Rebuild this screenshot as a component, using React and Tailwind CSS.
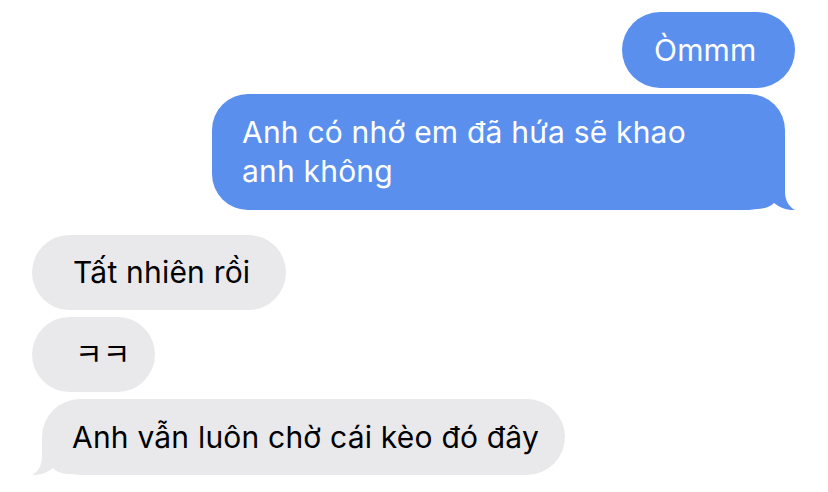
import React from "react";

const font = { fontFamily: "Inter, 'Noto Sans CJK KR', sans-serif" };

const tailPath =
  "M0 0 L30 0 L30 22 C30 30 34 37 40 40 C33 40.5 25 38 19 33 C15 37 10 39 0 39 Z";

function BlueTail() {
  return (
    <svg
      className="absolute right-[-10px] bottom-[-1px]"
      width="40"
      height="41"
      viewBox="0 0 40 41"
    >
      <path d={tailPath} fill="#5b8fee" />
    </svg>
  );
}

function GrayTail() {
  return (
    <svg
      className="absolute left-[-10px] bottom-[-1px] -scale-x-100"
      width="40"
      height="41"
      viewBox="0 0 40 41"
    >
      <path d={tailPath} fill="#e9e9eb" />
    </svg>
  );
}

export default function App() {
  return (
    <div
      className="w-[828px] h-[492px] bg-white overflow-hidden pt-[12px] tracking-[0.2px]"
      style={font}
    >
      {/* sent */}
      <div className="flex flex-col items-end gap-[6px] pr-[33px]">
        <div className="h-[76px] w-[173px] rounded-full bg-[#5b8fee] text-white text-[30px] flex items-center pl-[32px] whitespace-nowrap">
          Òmmm
        </div>
        <div className="relative mr-[10px] h-[116px] w-[573px] rounded-[36px] bg-[#5b8fee] text-white text-[30px] leading-[39px] flex items-center pl-[30px]">
          <div className="relative z-10">
            Anh có nhớ em đã hứa sẽ khao
            <br />
            anh không
          </div>
          <BlueTail />
        </div>
      </div>

      {/* received */}
      <div className="flex flex-col items-start gap-[7px] pl-[32px] mt-[25px]">
        <div className="h-[75px] w-[254px] rounded-full bg-[#e9e9eb] text-black text-[30px] flex items-center pl-[41px] whitespace-nowrap">
          Tất nhiên rồi
        </div>
        <div className="h-[75px] w-[123px] rounded-full bg-[#e9e9eb] text-black text-[30px] flex items-center pl-[43px] whitespace-nowrap">
          ㅋㅋ
        </div>
        <div className="relative ml-[10px] h-[76px] w-[523px] rounded-full bg-[#e9e9eb] text-black text-[30px] flex items-center pl-[30px] whitespace-nowrap">
          <span className="relative z-10">Anh vẫn luôn chờ cái kèo đó đây</span>
          <GrayTail />
        </div>
      </div>
    </div>
  );
}
